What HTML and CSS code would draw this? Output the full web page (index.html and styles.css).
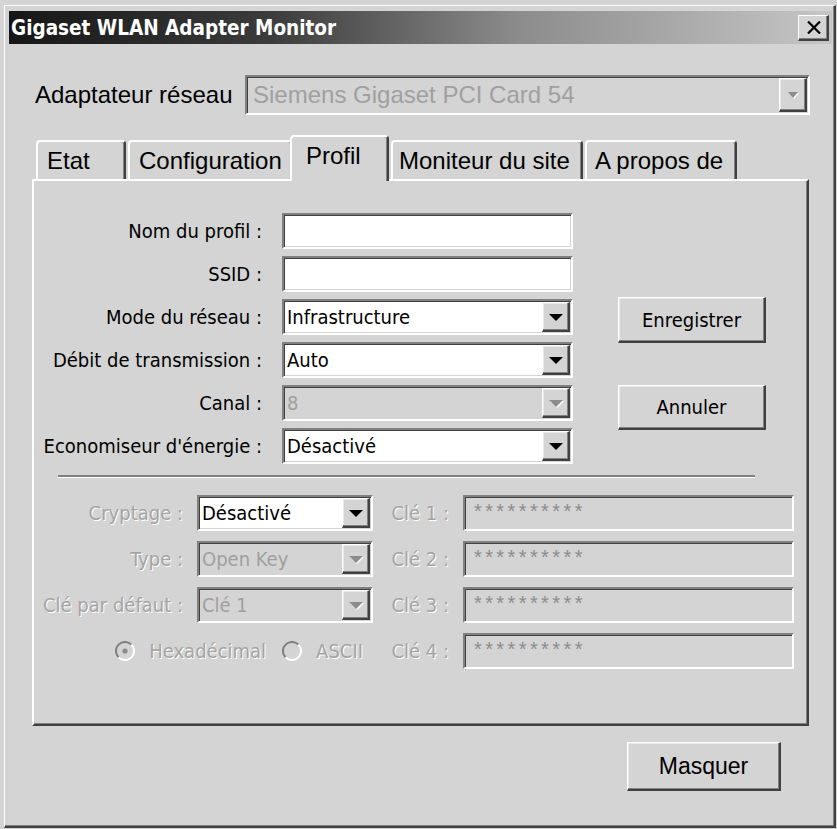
FILE: index.html
```html
<!DOCTYPE html>
<html lang="fr">
<head>
<meta charset="utf-8">
<title>Gigaset WLAN Adapter Monitor</title>
<link rel="stylesheet" href="styles.css">
</head>
<body>
<div class="window">
  <div class="titlebar">
    <span class="title">Gigaset WLAN Adapter Monitor</span>
    <button class="close" type="button" aria-label="Fermer">
      <svg width="16" height="13" viewBox="0 0 16 13"><path d="M2 0.5 L14 12.5 M14 0.5 L2 12.5" stroke="#000" stroke-width="2.2" fill="none"/></svg>
    </button>
  </div>
  <div class="body">
    <div class="adapter-row">
      <span class="adapter-label">Adaptateur réseau</span>
      <div class="field combo adapter-combo disabled">
        <span class="value">Siemens Gigaset PCI Card 54</span>
        <span class="drop"><i class="arrow small"></i></span>
      </div>
    </div>

    <div class="tabs">
      <div class="tab tab-etat">Etat</div>
      <div class="tab tab-config">Configuration</div>
      <div class="tab tab-profil selected">Profil</div>
      <div class="tab tab-moniteur">Moniteur du site</div>
      <div class="tab tab-apropos">A propos de</div>
    </div>

    <div class="panel">
      <div class="upper">
        <div class="form-grid">
          <label class="lbl">Nom du profil :</label>
          <div class="field"></div>
          <label class="lbl">SSID :</label>
          <div class="field"></div>
          <label class="lbl">Mode du réseau :</label>
          <div class="field combo"><span class="value">Infrastructure</span><span class="drop"><i class="arrow"></i></span></div>
          <label class="lbl">Débit de transmission :</label>
          <div class="field combo"><span class="value">Auto</span><span class="drop"><i class="arrow"></i></span></div>
          <label class="lbl">Canal :</label>
          <div class="field combo disabled"><span class="value">8</span><span class="drop"><i class="arrow"></i></span></div>
          <label class="lbl">Economiseur d'énergie :</label>
          <div class="field combo"><span class="value">Désactivé</span><span class="drop"><i class="arrow"></i></span></div>
        </div>
        <div class="side-buttons">
          <button class="btn btn-side" type="button">Enregistrer</button>
          <button class="btn btn-side btn-annuler" type="button">Annuler</button>
        </div>
      </div>

      <div class="separator"></div>

      <div class="lower">
        <label class="lbl etched">Cryptage :</label>
        <div class="field combo"><span class="value">Désactivé</span><span class="drop"><i class="arrow"></i></span></div>
        <label class="lbl etched">Clé 1 :</label>
        <div class="field disabled key"><span class="stars">**********</span></div>

        <label class="lbl etched">Type :</label>
        <div class="field combo disabled"><span class="value">Open Key</span><span class="drop"><i class="arrow"></i></span></div>
        <label class="lbl etched">Clé 2 :</label>
        <div class="field disabled key"><span class="stars">**********</span></div>

        <label class="lbl etched">Clé par défaut :</label>
        <div class="field combo disabled"><span class="value">Clé 1</span><span class="drop"><i class="arrow"></i></span></div>
        <label class="lbl etched">Clé 3 :</label>
        <div class="field disabled key"><span class="stars">**********</span></div>

        <div class="radios">
          <span class="radio">
            <svg width="20" height="20" viewBox="0 0 20 20"><circle cx="10" cy="10" r="8" fill="#d4d4d4"/><path d="M3.6 16.4 A9 9 0 0 1 16.4 3.6" stroke="#808080" stroke-width="2" fill="none"/><path d="M16.4 3.6 A9 9 0 0 1 3.6 16.4" stroke="#fff" stroke-width="2" fill="none"/><circle cx="10" cy="10" r="2.6" fill="#8a8a8a"/></svg>
            <span class="etched">Hexadécimal</span>
          </span>
          <span class="radio">
            <svg width="20" height="20" viewBox="0 0 20 20"><circle cx="10" cy="10" r="8" fill="#d4d4d4"/><path d="M3.6 16.4 A9 9 0 0 1 16.4 3.6" stroke="#808080" stroke-width="2" fill="none"/><path d="M16.4 3.6 A9 9 0 0 1 3.6 16.4" stroke="#fff" stroke-width="2" fill="none"/></svg>
            <span class="etched">ASCII</span>
          </span>
        </div>
        <label class="lbl etched">Clé 4 :</label>
        <div class="field disabled key"><span class="stars">**********</span></div>
      </div>
    </div>

    <div class="footer">
      <button class="btn btn-masquer" type="button">Masquer</button>
    </div>
  </div>
</div>
</body>
</html>
```
FILE: styles.css
```css
* { box-sizing: border-box; }

html, body {
  margin: 0;
  padding: 0;
}

body {
  background: #d4d4d4;
  width: 837px;
  height: 829px;
  overflow: hidden;
  font-family: "DejaVu Sans Condensed", "DejaVu Sans", sans-serif;
  font-stretch: condensed;
  font-size: 20px;
  color: #000;
}

.window {
  margin: 5px 1px 0 4px;
  width: 832px;
  height: 823px;
  border-style: solid;
  border-width: 1px 2px 2px 1px;
  border-color: #fff #404040 #404040 #fff;
  box-shadow: inset -1px -1px 0 #808080;
  padding: 5px 2px 0 4px;
  display: flex;
  flex-direction: column;
}

/* Title bar */
.titlebar {
  height: 33px;
  background: linear-gradient(to right, #161616 0%, #3c3c3c 32%, #8c8c8c 62%, #c6c6c6 100%);
  display: flex;
  align-items: center;
  padding: 0 3px 0 2px;
}

.title {
  color: #fff;
  font-weight: bold;
  font-size: 20.5px;
  flex: 1;
}

.close {
  width: 31px;
  height: 26px;
  padding: 0;
  margin: 0;
  background: #d4d4d4;
  border-style: solid;
  border-width: 1px 2px 2px 1px;
  border-color: #fff #404040 #404040 #fff;
  box-shadow: inset -1px -1px 0 #808080;
  display: flex;
  align-items: center;
  justify-content: center;
}

.close svg { display: block; margin-left: 1px; }

/* Body */
.body {
  padding: 0 23px;
  flex: 1;
  display: flex;
  flex-direction: column;
}

.adapter-row {
  margin-top: 31px;
  height: 40px;
  display: flex;
  align-items: center;
  justify-content: space-between;
}

.adapter-label {
  margin-left: 3px;
  font-family: "Liberation Sans", Arial, sans-serif;
  font-stretch: normal;
  font-size: 24px;
}

.adapter-combo {
  width: 565px;
  height: 40px;
  margin-right: -1px;
}

.adapter-combo .value {
  font-family: "Liberation Sans", Arial, sans-serif;
  font-stretch: normal;
  font-size: 24px;
  color: #a8a8a8;
  padding-left: 6px;
}

/* Fields */
.field {
  background: #fff;
  border-style: solid;
  border-width: 2px;
  border-color: #808080 #fff #fff #808080;
  box-shadow: inset 1px 1px 0 #404040, inset -1px -1px 0 #d4d4d4;
  display: flex;
  align-items: center;
  min-width: 0;
}

.field.disabled { background: #d4d4d4; }

.value {
  padding-left: 3px;
  white-space: nowrap;
  flex: 1;
}

.field.disabled .value { color: #a0a0a0; }

.drop {
  align-self: stretch;
  width: 28px;
  margin: 1px;
  background: #d4d4d4;
  border-style: solid;
  border-width: 1px 2px 2px 1px;
  border-color: #fff #404040 #404040 #fff;
  box-shadow: inset -1px -1px 0 #808080, inset 1px 1px 0 #e8e8e8;
  display: flex;
  align-items: center;
  justify-content: center;
}

.arrow {
  display: block;
  width: 0;
  height: 0;
  border-left: 7px solid transparent;
  border-right: 7px solid transparent;
  border-top: 7px solid #000;
  margin-top: 1px;
}

.arrow.small {
  border-left-width: 5px;
  border-right-width: 5px;
  border-top-width: 6px;
}

.field.disabled .arrow {
  border-top-color: #8c8c8c;
  filter: drop-shadow(1px 1px 0 #fff);
}

/* Tabs */
.tabs {
  margin-top: 20px;
  height: 44px;
  display: flex;
  align-items: flex-end;
  padding-left: 4px;
  font-family: "Liberation Sans", Arial, sans-serif;
  font-stretch: normal;
  font-size: 24px;
}

.tab {
  height: 39px;
  margin-right: 2px;
  padding-left: 9px;
  display: flex;
  align-items: center;
  background: #d4d4d4;
  border-style: solid;
  border-width: 2px 2px 0 2px;
  border-color: #fff #404040 transparent #fff;
  border-radius: 4px 4px 0 0;
  box-shadow: inset -1px 0 0 #808080;
  white-space: nowrap;
}

.tab-etat { width: 90px; }
.tab-config { width: 165px; }
.tab-profil { width: 99px; }
.tab-moniteur { width: 192px; padding-left: 6px; }
.tab-apropos { width: 152px; padding-left: 8px; }

.tab.selected {
  height: 46px;
  margin-left: -5px;
  margin-bottom: -2px;
  padding-left: 14px;
  padding-bottom: 6px;
  position: relative;
  z-index: 1;
}

/* Panel */
.panel {
  height: 547px;
  border-style: solid;
  border-width: 2px;
  border-color: #fff #404040 #404040 #fff;
  box-shadow: inset -1px -1px 0 #808080;
  padding-top: 32px;
}

.upper {
  display: flex;
}

.form-grid {
  display: grid;
  grid-template-columns: 228px 291px;
  grid-auto-rows: 36px;
  column-gap: 20px;
  row-gap: 7px;
}

.lbl {
  display: flex;
  align-items: center;
  justify-content: flex-end;
  white-space: nowrap;
}

.etched {
  color: #a4a4a4;
  text-shadow: 1px 1px 0 #fff;
}

.side-buttons {
  margin-left: 45px;
  padding-top: 84px;
  display: flex;
  flex-direction: column;
  gap: 42px;
}

.btn {
  background: #d4d4d4;
  border-style: solid;
  border-width: 1px 2px 2px 1px;
  border-color: #fff #404040 #404040 #fff;
  box-shadow: inset -1px -1px 0 #808080, inset 1px 1px 0 #e8e8e8;
  font-family: inherit;
  font-stretch: inherit;
  font-size: 20px;
  color: #000;
  padding: 0;
}

.btn-side {
  width: 148px;
  height: 46px;
}

.btn-annuler { height: 45px; }

.separator {
  margin: 11px 0 0 24px;
  width: 697px;
  height: 3px;
  border-top: 2px solid #808080;
  border-bottom: 1px solid #fff;
}

.lower {
  margin-top: 17px;
  display: grid;
  grid-template-columns: 149px 176px 62px 331px;
  grid-auto-rows: 36px;
  column-gap: 14px;
  row-gap: 10px;
}

.key { align-items: flex-start; }

.stars {
  font-family: "Liberation Sans", Arial, sans-serif;
  font-stretch: normal;
  font-size: 20px;
  line-height: 20px;
  letter-spacing: 3.4px;
  color: #8c8c8c;
  padding: 4px 0 0 9px;
}

.radios {
  grid-column: 1 / span 2;
  display: flex;
  align-items: center;
  justify-content: flex-end;
  gap: 16px;
  padding-right: 10px;
}

.radio {
  display: flex;
  align-items: center;
  gap: 14px;
}

.radio svg { display: block; }

/* Footer */
.footer {
  display: flex;
  justify-content: flex-end;
  margin-top: 16px;
  padding-right: 28px;
}

.btn-masquer {
  width: 154px;
  height: 49px;
  font-family: "Liberation Sans", Arial, sans-serif;
  font-stretch: normal;
  font-size: 23px;
}
```
